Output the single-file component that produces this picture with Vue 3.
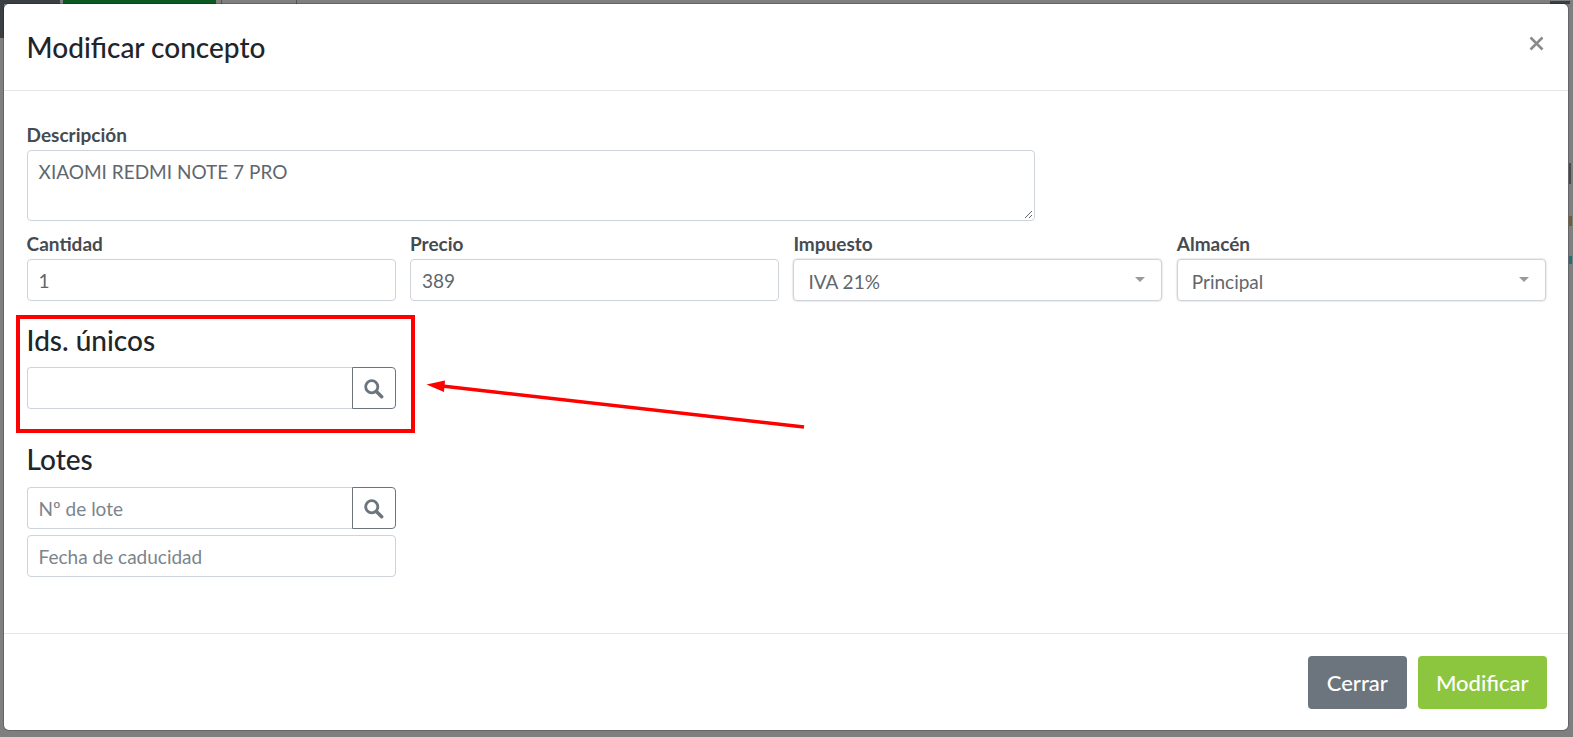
<template>
  <div class="backdrop">
    <!-- restos de la pagina detras del modal -->
    <div class="behind behind-dark"></div>
    <div class="behind behind-side"></div>
    <div class="behind behind-green"></div>
    <div class="behind behind-line1"></div>
    <div class="behind behind-line2"></div>
    <div class="behind behind-corner"></div>
    <div class="behind behind-arc"></div>
    <div class="behind behind-orange"></div>
    <div class="behind behind-teal"></div>

    <div class="modal">
      <header class="modal-header">
        <h5 class="modal-title">Modificar concepto</h5>
        <svg class="close" viewBox="0 0 15 15" width="15" height="15">
          <path d="M1.5 1.5l12 12M13.5 1.5l-12 12" stroke="#8a8a8a" stroke-width="2.6" fill="none" />
        </svg>
      </header>

      <div class="modal-body">
        <label class="lbl">Descripción</label>
        <div class="textarea">
          XIAOMI REDMI NOTE 7 PRO
          <svg class="grip" viewBox="0 0 10 10" width="10" height="10">
            <path d="M9 2L2 9M9 6L6 9" stroke="#666" stroke-width="1" fill="none" />
          </svg>
        </div>

        <div class="row">
          <div v-for="f in fields" :key="f.label" class="col">
            <label class="lbl">{{ f.label }}</label>
            <div v-if="f.select" class="control select">
              <span>{{ f.value }}</span>
              <i class="caret"></i>
            </div>
            <div v-else class="control">{{ f.value }}</div>
          </div>
        </div>

        <section class="block block-ids">
          <h4 class="block-title">Ids. únicos</h4>
          <div class="group">
            <div class="control grow"></div>
            <button class="search">
              <svg viewBox="0 0 18 18" width="21" height="21">
                <circle cx="7.5" cy="7.5" r="5.2" stroke="#6c757d" stroke-width="2.4" fill="none" />
                <path d="M11.5 11.5l4.5 4.5" stroke="#6c757d" stroke-width="3" stroke-linecap="round" />
              </svg>
            </button>
          </div>
          <div class="highlight"></div>
        </section>

        <section class="block block-lotes">
          <h4 class="block-title">Lotes</h4>
          <div class="group">
            <div class="control grow ph">Nº de lote</div>
            <button class="search">
              <svg viewBox="0 0 18 18" width="21" height="21">
                <circle cx="7.5" cy="7.5" r="5.2" stroke="#6c757d" stroke-width="2.4" fill="none" />
                <path d="M11.5 11.5l4.5 4.5" stroke="#6c757d" stroke-width="3" stroke-linecap="round" />
              </svg>
            </button>
          </div>
          <div class="control ph date">Fecha de caducidad</div>
        </section>
      </div>

      <footer class="modal-footer">
        <button class="btn btn-grey">Cerrar</button>
        <button class="btn btn-green">Modificar</button>
      </footer>
    </div>

    <!-- flecha de la anotacion, en coordenadas de la captura -->
    <svg class="arrow" width="1573" height="737" viewBox="0 0 1573 737">
      <path d="M804 427L442 386" stroke="#ff0000" stroke-width="3.5" fill="none" />
      <path d="M426.5 384.5L445 380.5L444 392Z" fill="#ff0000" />
    </svg>
  </div>
</template>

<script setup>
const fields = [
  { label: "Cantidad", value: "1" },
  { label: "Precio", value: "389" },
  { label: "Impuesto", value: "IVA 21%", select: true },
  { label: "Almacén", value: "Principal", select: true },
];
</script>

<style>
html,
body {
  margin: 0;
  overflow: hidden;
}
</style>

<style scoped>
.backdrop {
  position: relative;
  box-sizing: border-box;
  width: 1573px;
  height: 737px;
  padding: 4px 5px 7px 4px;
  background: #7f7f7f;
  font-family: Lato, "Liberation Sans", sans-serif;
  display: flex;
}
.behind {
  position: absolute;
  top: 0;
  height: 4px;
}
.behind-dark {
  left: 0;
  width: 60px;
  background: #3a3f44;
}
.behind-side {
  left: 0;
  width: 4px;
  height: 38px;
  background: #3a3f44;
}
.behind-green {
  left: 63px;
  width: 153px;
  background: #0c5a22;
}
.behind-line1 {
  left: 221px;
  width: 1px;
  background: #555;
}
.behind-line2 {
  left: 296px;
  width: 1px;
  background: #555;
}
.behind-corner {
  left: 1550px;
  top: 1px;
  width: 20px;
  height: 3px;
  background: #3a3f44;
}
.behind-arc {
  left: 1569px;
  top: 163px;
  width: 2px;
  height: 21px;
  background: #4a4a4a;
}
.behind-orange {
  left: 1569px;
  top: 216px;
  width: 3px;
  height: 10px;
  background: #7a5a30;
}
.behind-teal {
  left: 1569px;
  top: 256px;
  width: 3px;
  height: 8px;
  background: #1f6f80;
}
.modal {
  position: relative;
  flex: 1;
  display: flex;
  flex-direction: column;
  background: #fff;
  border-radius: 5px;
  box-shadow: 0 0 0 1px rgba(0, 0, 0, 0.2);
}
.modal-header {
  display: flex;
  align-items: center;
  justify-content: space-between;
  height: 86px;
  padding: 0 24px 0 22.6px;
  border-bottom: 1px solid #e4e7ea;
}
.modal-title {
  margin: 0;
  font-size: 28px;
  font-weight: 500;
  color: #212529;
}
.close {
  margin-top: -7px;
}
.modal-body {
  flex: 1;
  padding: 33px 21px 0 22.6px;
}
.lbl {
  display: block;
  font-size: 19px;
  font-weight: 700;
  line-height: 22px;
  color: #454b51;
}
.textarea {
  position: relative;
  box-sizing: border-box;
  height: 71px;
  margin-top: 4px;
  width: 1008px;
  padding: 9px 11px;
  border: 1px solid #ced4da;
  border-radius: 4px;
  font-size: 19px;
  line-height: 24px;
  color: #5f676e;
}
.grip {
  position: absolute;
  right: 1px;
  bottom: 1px;
}
.row {
  display: grid;
  grid-template-columns: repeat(4, 369px);
  column-gap: 14.4px;
  margin-top: 12px;
}
.control {
  box-sizing: border-box;
  height: 42px;
  margin-top: 4px;
  padding: 0 11px;
  display: flex;
  align-items: center;
  border: 1px solid #ced4da;
  border-radius: 4px;
  font-size: 19px;
  color: #5f676e;
}
.select {
  justify-content: space-between;
  padding: 2px 16px 0 14px;
  box-shadow: 0 0 2px rgba(0, 0, 0, 0.25);
}
.caret {
  width: 0;
  height: 0;
  margin-top: -3px;
  border-left: 5px solid transparent;
  border-right: 5px solid transparent;
  border-top: 5px solid #9a9a9a;
}
.block {
  position: relative;
  width: 369px;
}
.block-ids {
  margin-top: 24px;
}
.block-lotes {
  margin-top: 35px;
}
.block-title {
  margin: 0;
  font-size: 28px;
  font-weight: 500;
  line-height: 30px;
  color: #212529;
}
.group {
  display: flex;
  margin-top: 12px;
}
.block-lotes .group {
  margin-top: 13px;
}
.group .control {
  margin-top: 0;
}
.grow {
  flex: 1;
  border-right: 0;
  border-radius: 4px 0 0 4px;
}
.ph {
  color: #7b848c;
}
.date {
  margin-top: 6px;
}
.search {
  box-sizing: border-box;
  width: 44px;
  height: 42px;
  padding: 0;
  display: flex;
  align-items: center;
  justify-content: center;
  background: #fff;
  border: 1px solid #6c757d;
  border-radius: 0 4px 4px 0;
}
.highlight {
  position: absolute;
  left: -10.6px;
  top: -10px;
  right: -19px;
  bottom: -24px;
  border: 4px solid #ff0000;
}
.arrow {
  position: absolute;
  left: 0;
  top: 0;
  pointer-events: none;
}
.modal-footer {
  display: flex;
  justify-content: flex-end;
  gap: 10.6px;
  height: 97px;
  box-sizing: border-box;
  padding: 22px 21px 0 0;
  border-top: 1px solid #e4e7ea;
}
.btn {
  height: 52.6px;
  padding: 0;
  border: 0;
  border-radius: 4px;
  font-family: inherit;
  font-size: 22px;
  font-weight: 500;
  color: #fff;
}
.btn-grey {
  width: 99.4px;
  background: #6c757d;
}
.btn-green {
  width: 129.4px;
  background: #8cc63f;
}
</style>
